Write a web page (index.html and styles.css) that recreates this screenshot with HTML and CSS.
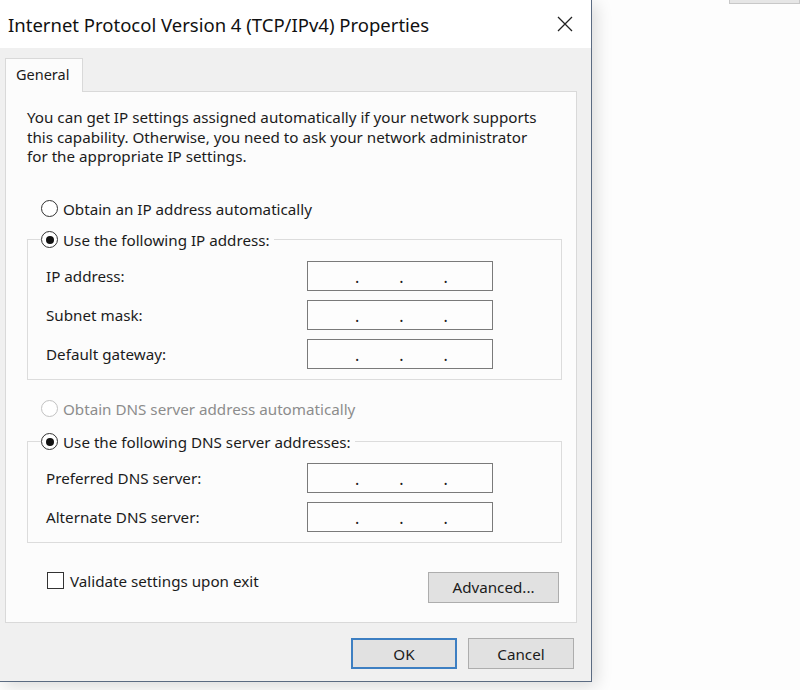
FILE: index.html
```html
<!DOCTYPE html>
<html lang="en">
<head>
    <meta charset="UTF-8">
    <title>Internet Protocol Version 4 (TCP/IPv4) Properties</title>
    <link rel="stylesheet" href="styles.css">
</head>
<body>

<div class="desktop">
    <div class="dialog">
        <div class="titlebar">
            <span class="title">Internet Protocol Version 4 (TCP/IPv4) Properties</span>
            <svg class="close" width="16" height="16" viewBox="0 0 16 16">
                <path d="M1 1 L15 15 M15 1 L1 15" stroke="#222" stroke-width="1.3" fill="none"/>
            </svg>
        </div>

        <div class="body">
            <div class="tabs">
                <div class="tab">General</div>
            </div>

            <div class="panel">
                <p class="intro">You can get IP settings assigned automatically if your network supports<br>
                    this capability. Otherwise, you need to ask your network administrator<br>
                    for the appropriate IP settings.</p>

                <div class="radio-row first">
                    <span class="radio"></span>
                    <span>Obtain an IP address automatically</span>
                </div>

                <fieldset class="group">
                    <legend class="radio-row">
                        <span class="radio checked"></span>
                        <span>Use the following IP address:</span>
                    </legend>
                    <div class="field">
                        <span>IP address:</span>
                        <div class="ip-box"><span>.</span><span>.</span><span>.</span></div>
                    </div>
                    <div class="field">
                        <span>Subnet mask:</span>
                        <div class="ip-box"><span>.</span><span>.</span><span>.</span></div>
                    </div>
                    <div class="field">
                        <span>Default gateway:</span>
                        <div class="ip-box"><span>.</span><span>.</span><span>.</span></div>
                    </div>
                </fieldset>

                <div class="radio-row disabled">
                    <span class="radio"></span>
                    <span>Obtain DNS server address automatically</span>
                </div>

                <fieldset class="group dns">
                    <legend class="radio-row">
                        <span class="radio checked"></span>
                        <span>Use the following DNS server addresses:</span>
                    </legend>
                    <div class="field">
                        <span>Preferred DNS server:</span>
                        <div class="ip-box"><span>.</span><span>.</span><span>.</span></div>
                    </div>
                    <div class="field">
                        <span>Alternate DNS server:</span>
                        <div class="ip-box"><span>.</span><span>.</span><span>.</span></div>
                    </div>
                </fieldset>

                <div class="bottom-row">
                    <div class="check-row">
                        <span class="checkbox"></span>
                        <span>Validate settings upon exit</span>
                    </div>
                    <button class="btn advanced">Advanced...</button>
                </div>
            </div>

            <div class="footer">
                <button class="btn ok">OK</button>
                <button class="btn">Cancel</button>
            </div>
        </div>
    </div>

    <div class="backdrop">
        <div class="back-bar"></div>
    </div>
</div>

</body>
</html>
```

FILE: styles.css
```css
body {
    margin: 0;
    padding: 0;
    background-color: #fdfdfd;
    font-family: 'Noto Sans', 'Open Sans', sans-serif;
    color: #1b1b1b;
}

.desktop {
    display: flex;
    width: 800px;
    height: 690px;
    overflow: hidden;
}

.dialog {
    width: 591px;
    height: 681px;
    flex-shrink: 0;
    background-color: #f0f0f0;
    border-right: 1px solid #5b6b82;
    border-bottom: 1px solid #5b6b82;
    box-shadow: 4px 4px 16px rgba(0, 0, 0, 0.14);
    display: flex;
    flex-direction: column;
    position: relative;
    z-index: 1;
}

.titlebar {
    height: 48px;
    background-color: #fff;
    display: flex;
    align-items: center;
    justify-content: space-between;
    padding: 0 18px 0 8px;
}

.title {
    font-size: 18.5px;
    color: #111;
}

.body {
    flex: 1;
    padding: 10px 14px 0 5px;
    font-size: 15.2px;
}

.tabs {
    display: flex;
}

.tab {
    width: 66px;
    height: 33px;
    padding-left: 10px;
    line-height: 30px;
    font-size: 14.5px;
    background-color: #fcfcfc;
    border: 1px solid #d9d9d9;
    border-bottom: none;
    position: relative;
    z-index: 1;
    margin-bottom: -1px;
}

.panel {
    height: 514px;
    background-color: #fcfcfc;
    border: 1px solid #d9d9d9;
    padding: 16px 15px 0 21px;
}

.intro {
    margin: 0;
    line-height: 19.5px;
    white-space: nowrap;
}

.radio-row {
    display: flex;
    align-items: center;
    height: 22px;
    padding-left: 14px;
    gap: 5px;
}

.radio-row.first {
    margin-top: 31px;
    margin-bottom: 9px;
}

.radio-row.disabled {
    color: #8c8c8c;
    margin-top: 18px;
    margin-bottom: 11px;
}

.radio {
    width: 15px;
    height: 15px;
    border: 1px solid #333;
    border-radius: 50%;
    background-color: #fff;
    display: flex;
    align-items: center;
    justify-content: center;
}

.radio.checked::after {
    content: "";
    width: 8px;
    height: 8px;
    border-radius: 50%;
    background-color: #111;
}

.disabled .radio {
    border-color: #c2c2c2;
}

.group {
    margin: 0;
    width: 497px;
    padding: 10px 18px 10px 18px;
    border: 1px solid #dcdcdc;
}

.group legend.radio-row {
    margin-left: -5px;
    padding: 0 4px 0 0;
}

.field {
    display: flex;
    align-items: center;
    justify-content: space-between;
    height: 30px;
    padding-right: 50px;
}

.field + .field {
    margin-top: 9px;
}

.ip-box {
    box-sizing: border-box;
    width: 186px;
    height: 30px;
    border: 1px solid #7a7a7a;
    background-color: #fdfdfd;
    display: flex;
    align-items: flex-end;
    padding-left: 47px;
    padding-bottom: 3px;
    gap: 40px;
    line-height: 20px;
    font-size: 16px;
}

.bottom-row {
    display: flex;
    justify-content: space-between;
    align-items: flex-start;
    margin-top: 29px;
    width: 532px;
}

.check-row {
    display: flex;
    align-items: center;
    gap: 6px;
    padding-left: 20px;
    height: 18px;
}

.checkbox {
    width: 15px;
    height: 15px;
    border: 1px solid #333;
    background-color: #fff;
}

.btn {
    font-family: inherit;
    font-size: 15.2px;
    color: #1b1b1b;
    background-color: #e1e1e1;
    border: 1px solid #adadad;
    height: 31px;
    padding: 0;
}

.advanced {
    width: 131px;
}

.footer {
    display: flex;
    justify-content: flex-end;
    gap: 11px;
    margin-top: 15px;
    padding-right: 3px;
}

.footer .btn {
    width: 106px;
    height: 31px;
}

.btn.ok {
    border: 2px solid #3d7fc2;
}

.backdrop {
    flex: 1;
    display: flex;
    justify-content: flex-end;
    align-items: flex-start;
}

.back-bar {
    width: 69px;
    height: 3px;
    background-color: #e6e6e6;
    border: 1px solid #c8c8c8;
    border-top: none;
}
```
